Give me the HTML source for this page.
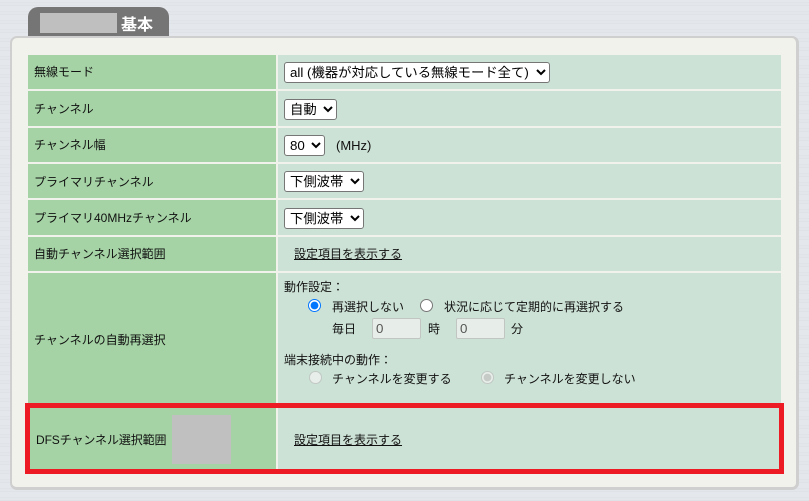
<!DOCTYPE html>
<html lang="ja"><head><meta charset="utf-8"><title>基本</title>
<style>
html,body{margin:0;padding:0}
body{width:809px;height:501px;overflow:hidden;position:relative;background:#e2e5ea;
font-family:"Liberation Sans","Noto Sans CJK JP",sans-serif;font-size:12px;color:#111}
.bg{position:absolute;inset:0;background:repeating-linear-gradient(180deg,#e4e7eb 0,#e4e7eb 2px,#e0e3e8 2px,#e0e3e8 3px,#e3e6ea 3px,#e3e6ea 5px,#dfe2e7 5px,#dfe2e7 6px,#e4e7eb 6px,#e4e7eb 9px)}
.tab{position:absolute;left:28px;top:7px;width:141px;height:29px;background:#757575;border-radius:10px 10px 0 0}
.tabg{position:absolute;left:40px;top:13px;width:77px;height:20px;background:#bfbfbf}
.tabt{position:absolute;left:121px;top:12px;font-size:16px;line-height:22px;font-weight:bold;color:#fff;font-family:"Noto Sans CJK JP",sans-serif}
.panel{position:absolute;left:10px;top:36px;width:784px;height:449px;background:#f2f2ec;border:solid #cfcfcf;border-width:2px 3px 3px 2px;border-radius:7px}
.l,.r{position:absolute}
.l{left:28px;width:248px;background:#a5d3a5}
.r{left:278px;width:503px;background:#cde2d6}
.t{position:absolute;white-space:nowrap;line-height:16px}
select{position:absolute;margin:0;font-family:"Liberation Sans","Noto Sans CJK JP",sans-serif;font-size:13.33px;background:#fff;color:#000;border:1px solid #767676;border-radius:3px;box-sizing:border-box;padding:0 0 0 1px}
a{color:#111;text-decoration:underline}
input[type=radio]{position:absolute;margin:0;width:13px;height:13px}
input[type=text]{position:absolute;margin:0;box-sizing:border-box;width:49px;height:21px;background:#e7eee9;border:1px solid #c2c6c3;border-radius:2px;color:#555;font-size:13.33px;padding:0 3px;font-family:"Liberation Sans",sans-serif}
.red{position:absolute;left:25px;top:403px;width:749px;height:61px;border:5px solid #ed1c24}
.grey{position:absolute;left:172px;top:415px;width:59px;height:49px;background:#c0c0c0}
</style></head><body>
<div class="bg"></div>
<div class="panel"></div>
<div class="tab"></div><div class="tabg"></div><div class="tabt">基本</div>

<div class="l" style="top:55px;height:34px"></div><div class="r" style="top:55px;height:34px"></div>
<div class="l" style="top:91px;height:35px"></div><div class="r" style="top:91px;height:35px"></div>
<div class="l" style="top:128px;height:34px"></div><div class="r" style="top:128px;height:34px"></div>
<div class="l" style="top:164px;height:34px"></div><div class="r" style="top:164px;height:34px"></div>
<div class="l" style="top:200px;height:35px"></div><div class="r" style="top:200px;height:35px"></div>
<div class="l" style="top:237px;height:34px"></div><div class="r" style="top:237px;height:34px"></div>
<div class="l" style="top:273px;height:198px"></div><div class="r" style="top:273px;height:198px"></div>

<div class="t" style="left:34px;top:64px">無線モード</div>
<div class="t" style="left:34px;top:101px">チャンネル</div>
<div class="t" style="left:34px;top:137px">チャンネル幅</div>
<div class="t" style="left:34px;top:174px">プライマリチャンネル</div>
<div class="t" style="left:34px;top:210px">プライマリ40MHzチャンネル</div>
<div class="t" style="left:34px;top:246px">自動チャンネル選択範囲</div>
<div class="t" style="left:34px;top:332px">チャンネルの自動再選択</div>
<div class="t" style="left:36px;top:432px;letter-spacing:-.1px">DFSチャンネル選択範囲</div>

<select style="left:284px;top:62px;width:266px;height:21px"><option>all (機器が対応している無線モード全て)</option></select>
<select style="left:284px;top:99px;width:53px;height:21px"><option>自動</option></select>
<select style="left:284px;top:135px;width:41px;height:21px"><option>80</option></select>
<div class="t" style="left:336px;top:138px;font-size:13px">(MHz)</div>
<select style="left:284px;top:171px;width:80px;height:21px"><option>下側波帯</option></select>
<select style="left:284px;top:208px;width:80px;height:21px"><option>下側波帯</option></select>
<div class="t" style="left:294px;top:246px"><a href="#">設定項目を表示する</a></div>

<div class="t" style="left:284px;top:279px">動作設定：</div>
<input type="radio" name="a" checked style="left:308px;top:299px">
<div class="t" style="left:332px;top:299px">再選択しない</div>
<input type="radio" name="a" style="left:420px;top:299px">
<div class="t" style="left:444px;top:299px">状況に応じて定期的に再選択する</div>
<div class="t" style="left:332px;top:321px">毎日</div>
<input type="text" value="0" disabled style="left:372px;top:318px">
<div class="t" style="left:428px;top:321px">時</div>
<input type="text" value="0" disabled style="left:456px;top:318px">
<div class="t" style="left:511px;top:321px">分</div>
<div class="t" style="left:284px;top:352px">端末接続中の動作：</div>
<input type="radio" name="b" disabled style="left:309px;top:371px">
<div class="t" style="left:332px;top:371px">チャンネルを変更する</div>
<input type="radio" name="b" checked disabled style="left:481px;top:371px">
<div class="t" style="left:504px;top:371px">チャンネルを変更しない</div>

<div class="t" style="left:294px;top:432px"><a href="#">設定項目を表示する</a></div>
<div class="grey"></div>
<div class="red"></div>
</body></html>
